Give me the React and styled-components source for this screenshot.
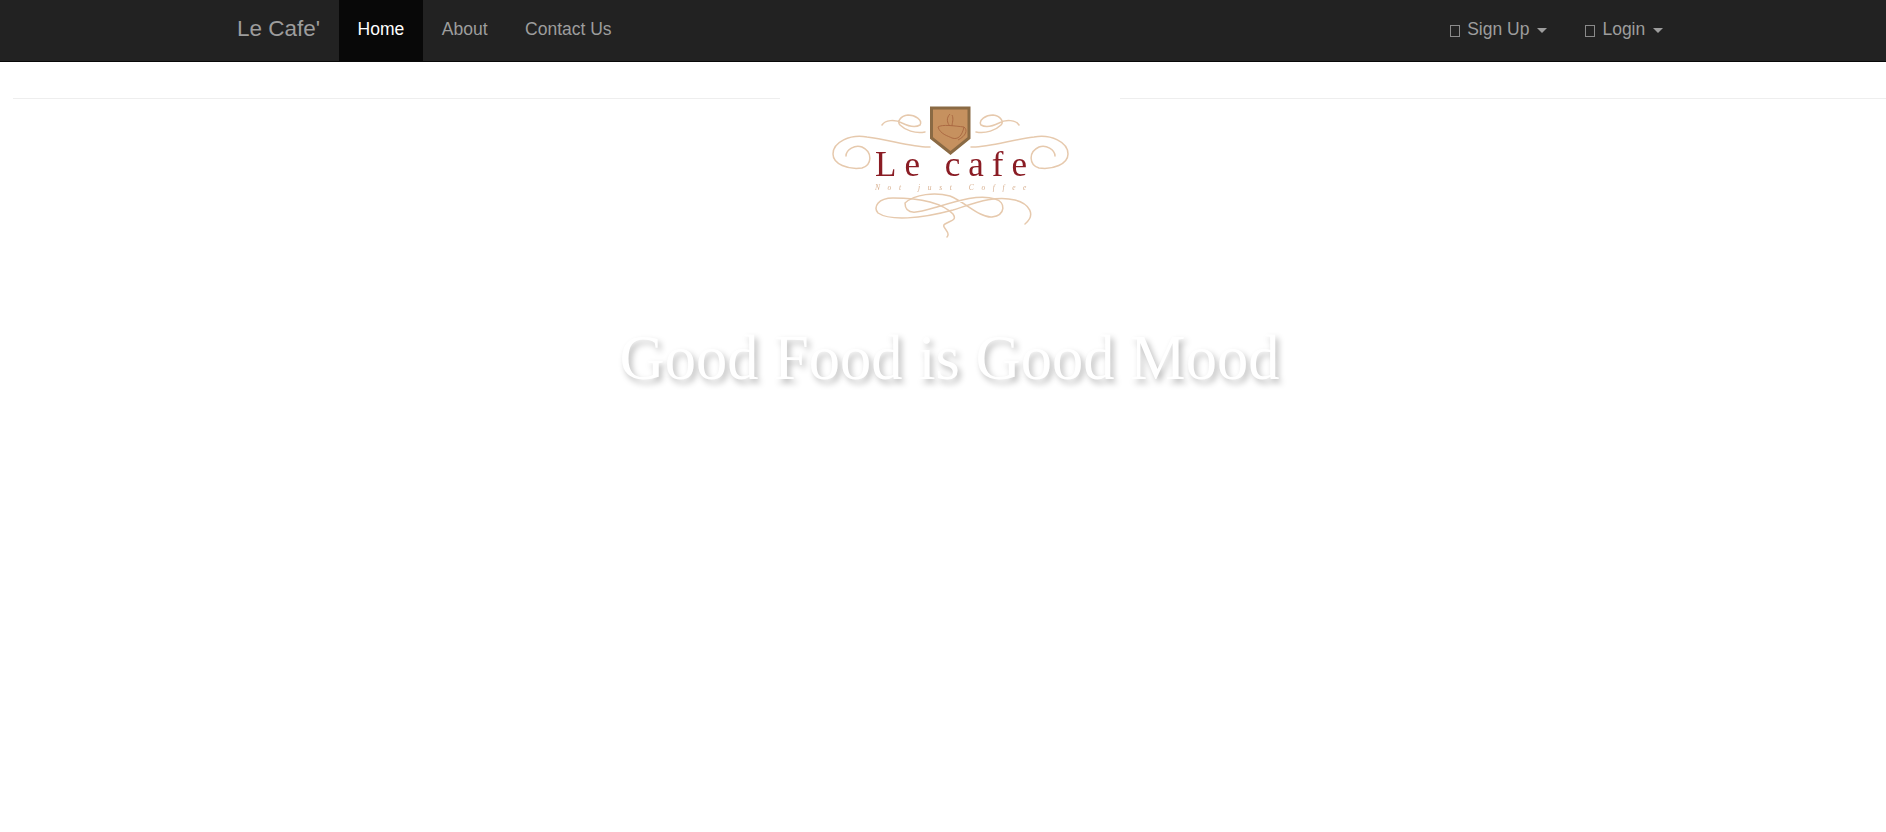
import React from 'react';
import styled, { createGlobalStyle } from 'styled-components';

const GlobalStyle = createGlobalStyle`
  html, body {
    margin: 0;
    padding: 0;
    background: #fff;
    overflow-x: hidden;
  }
  body {
    font-family: 'Liberation Sans', Arial, sans-serif;
    font-size: 17.5px;
  }
`;

const Navbar = styled.nav`
  display: flex;
  height: 61px;
  padding: 0 204.5px 0 218.25px;
  background: #222;
  border-bottom: 1px solid #080808;
`;

const NavGroup = styled.ul`
  display: flex;
  flex: ${({ $grow }) => ($grow ? 1 : 'none')};
  margin: 0;
  padding: 0;
  list-style: none;
`;

const Brand = styled.a`
  display: flex;
  align-items: center;
  box-sizing: border-box;
  height: 61px;
  padding: 0 18.75px 3px;
  color: #9d9d9d;
  font-size: 22.5px;
  text-decoration: none;
`;

const NavLink = styled.a`
  display: flex;
  align-items: center;
  box-sizing: border-box;
  height: 61px;
  padding: 0 18.75px 3px;
  color: ${({ $active }) => ($active ? '#fff' : '#9d9d9d')};
  background: ${({ $active }) => ($active ? '#080808' : 'transparent')};
  text-decoration: none;
`;

const MissingGlyph = styled.span`
  box-sizing: border-box;
  width: 10px;
  height: 12px;
  margin: 3px 7px 0 1px;
  border: 1px solid #8a8a8a;
`;

const Caret = styled.span`
  width: 0;
  height: 0;
  margin: 3px 0 0 7.5px;
  border-top: 5px solid #9d9d9d;
  border-left: 5px solid transparent;
  border-right: 5px solid transparent;
`;

const Main = styled.main`
  padding-left: 13px;
`;

const Rule = styled.hr`
  height: 1px;
  margin: 36px 0 0;
  border: 0;
  background: #eee;
`;

const LogoBox = styled.div`
  width: 340px;
  height: 160px;
  margin: -9px auto 0;
  background: #fff;
`;

const Logo = styled.svg`
  display: block;
  filter: blur(0.35px);
`;

const Headline = styled.h1`
  margin: 74px 0 0;
  color: #fff;
  font-family: 'Liberation Serif', 'Times New Roman', serif;
  font-size: 62.5px;
  font-weight: 400;
  line-height: 1.1;
  text-align: center;
  text-shadow: 3px 4px 6px rgba(0, 0, 0, 0.28);
`;

function CafeLogo() {
  const curls = (
    <>
      <path d="M150 57 C135 58 110 50 87 47 C70 44 53 52 53 64 C53 74 68 80 82 78 C92 75 93 62 82 57 C75 54 66 60 66 66" />
      <path d="M102 35 C105 30 115 29 122 33 C130 37 135 38 140 35 C143 30 135 25 128 25 C120 26 117 32 120 35 C125 40 135 44 145 42" />
    </>
  );
  return (
    <Logo width="340" height="160" viewBox="0 0 340 160">
      <g fill="none" stroke="#e6c9ad" strokeWidth="1.5" strokeLinecap="round">
        {curls}
        <g transform="translate(341 0) scale(-1 1)">{curls}</g>
        <path d="M167 147 C172 142 160 137 165 134 C172 130 177 130 173 124 C160 111 135 108 113 108 C98 108 93 117 98 123 C110 131 140 129 173 120 C195 113 215 105 235 110 C250 114 256 125 245 134" />
        <path d="M125 113 C135 104 155 102 170 106 C185 112 200 128 212 127 C226 125 226 112 215 109 C200 104 180 110 157 117 C140 122 125 127 125 113" />
      </g>
      <path d="M151.5 18 H189 V48 L170.5 63 L151.5 48 Z" fill="#c6915f" stroke="#8a6a44" strokeWidth="3" />
      <g fill="none" stroke="#a8653f" strokeWidth="0.9">
        <path d="M158 37 C162 34 175 36 184 37 M158 37 C160 44 168 46 172 48 C178 50 182 46 184 37 C188 40 186 46 178 50" />
        <path d="M170 24 C166 28 167 33 170 36 M172 25 C174 29 172 33 172 36" />
      </g>
      <text x="95" y="86" fill="#8a1c24" fontFamily="'Liberation Serif', serif" fontSize="35" letterSpacing="8">
        Le cafe
      </text>
      <text x="95" y="100" fill="#d8b090" fontFamily="'Liberation Serif', serif" fontSize="7.5" fontStyle="italic" letterSpacing="7.6">
        Not just Coffee
      </text>
    </Logo>
  );
}

export default function App() {
  return (
    <>
      <GlobalStyle />
      <Navbar>
        <NavGroup>
          <li><Brand href="#">Le Cafe'</Brand></li>
        </NavGroup>
        <NavGroup $grow>
          <li><NavLink href="#" $active>Home</NavLink></li>
          <li><NavLink href="#">About</NavLink></li>
          <li><NavLink href="#">Contact Us</NavLink></li>
        </NavGroup>
        <NavGroup>
          <li><NavLink href="#"><MissingGlyph />Sign Up<Caret /></NavLink></li>
          <li><NavLink href="#"><MissingGlyph />Login<Caret /></NavLink></li>
        </NavGroup>
      </Navbar>
      <Main>
        <Rule />
        <LogoBox><CafeLogo /></LogoBox>
        <Headline>Good Food is Good Mood</Headline>
      </Main>
    </>
  );
}
